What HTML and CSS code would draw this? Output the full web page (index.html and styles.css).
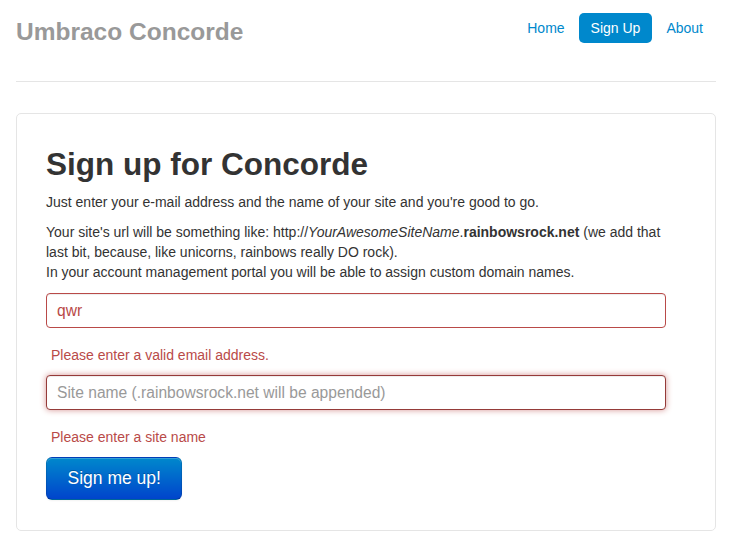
FILE: index.html
```html
<!DOCTYPE html>
<html lang="en">
<head>
<meta charset="utf-8">
<title>Umbraco Concorde - Sign Up</title>
<link rel="stylesheet" href="styles.css">
</head>
<body>
<div class="container">
  <header class="masthead">
    <h3 class="brand">Umbraco Concorde</h3>
    <ul class="nav-pills">
      <li><a href="#">Home</a></li>
      <li class="active"><a href="#">Sign Up</a></li>
      <li><a href="#">About</a></li>
    </ul>
  </header>
  <main class="card">
    <h1 class="title">Sign up for Concorde</h1>
    <p>Just enter your e-mail address and the name of your site and you're good to go.</p>
    <p>Your site's url will be something like: http://<em>YourAwesomeSiteName</em>.<strong>rainbowsrock.net</strong> (we add that last bit, because, like unicorns, rainbows really DO rock).<br>In your account management portal you will be able to assign custom domain names.</p>
    <form class="signup">
      <input class="field" type="text" value="qwr">
      <span class="error">Please enter a valid email address.</span>
      <input class="field focus" type="text" placeholder="Site name (.rainbowsrock.net will be appended)">
      <span class="error">Please enter a site name</span>
      <button class="btn-primary" type="button">Sign me up!</button>
    </form>
  </main>
</div>
</body>
</html>
```
FILE: styles.css
```css
* { box-sizing: border-box; }
html, body { margin: 0; padding: 0; background: #fff; }
body {
  font-family: "Liberation Sans", Arial, Helvetica, sans-serif;
  font-size: 14px;
  line-height: 20px;
  color: #333;
}
.container {
  width: 700px;
  margin-left: 16px;
}
.masthead {
  display: flex;
  justify-content: space-between;
  align-items: flex-start;
  height: 82px;
  padding-top: 12px;
  border-bottom: 1px solid #e5e5e5;
}
.brand {
  margin: 0;
  font-size: 24.5px;
  line-height: 40px;
  font-weight: bold;
  color: #999;
}
.nav-pills {
  display: flex;
  list-style: none;
  margin: 1px 1px 0 0;
  padding: 0;
}
.nav-pills li { margin-left: 2px; }
.nav-pills a {
  display: block;
  padding: 8px 12px;
  line-height: 14px;
  font-size: 14px;
  color: #0088cc;
  text-decoration: none;
  border-radius: 5px;
}
.nav-pills .active a {
  background: #0088cc;
  color: #fff;
}
.card {
  margin-top: 31px;
  border: 1px solid #e5e5e5;
  border-radius: 5px;
  padding: 30px 29px 29px;
  min-height: 418px;
}
.title {
  margin: 0 0 8px;
  font-size: 31.5px;
  line-height: 40px;
  font-weight: bold;
  color: #333;
}
p { margin: 0 0 10px; max-width: 625px; }
.signup {
  display: flex;
  flex-direction: column;
  align-items: flex-start;
  padding-top: 1px;
}
.field {
  width: 620px;
  height: 35px;
  padding: 6px 10px;
  font-family: "Liberation Sans", Arial, Helvetica, sans-serif;
  font-size: 15.6px;
  line-height: 20px;
  color: #b94a48;
  background: #fff;
  border: 1px solid #b94a48;
  border-radius: 4px;
  box-shadow: inset 0 1px 1px rgba(0,0,0,0.075);
  outline: none;
}
.field::placeholder { color: #999; }
.field.focus {
  border-color: #953b39;
  box-shadow: inset 0 1px 1px rgba(0,0,0,0.075), 0 0 6px #d59392;
}
.error {
  display: block;
  margin: 17px 0 10px;
  padding-left: 5px;
  color: #b94a48;
  line-height: 20px;
}
.btn-primary {
  padding: 11px 20.5px;
  font-family: "Liberation Sans", Arial, Helvetica, sans-serif;
  font-size: 17.5px;
  line-height: 19px;
  color: #fff;
  text-shadow: 0 -1px 0 rgba(0,0,0,0.25);
  background-color: #0074cc;
  background-image: linear-gradient(to bottom, #0088cc, #0044cc);
  border: 1px solid rgba(0,0,0,0.1);
  border-bottom-color: rgba(0,0,0,0.25);
  border-radius: 6px;
  box-shadow: inset 0 1px 0 rgba(255,255,255,0.2), 0 1px 2px rgba(0,0,0,0.05);
  cursor: pointer;
}
```
